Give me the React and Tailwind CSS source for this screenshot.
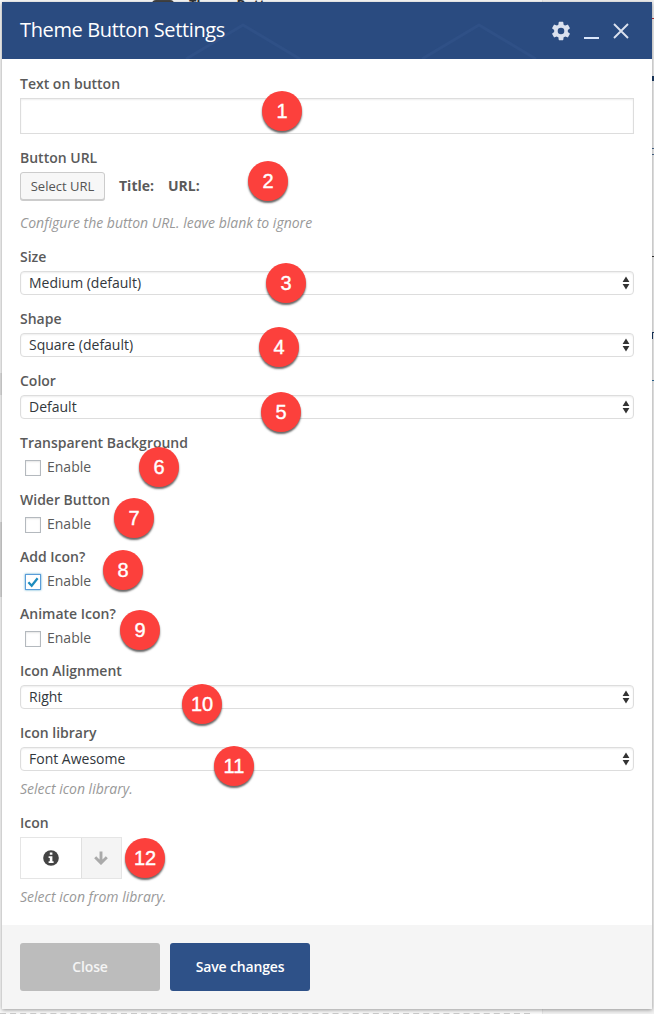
import React from "react";

const LABEL = "block h-5 text-[14px] leading-5 font-semibold text-[#5a5a5a]";
const HELP = "text-[14px] leading-5 italic text-[#999]";

function Select({ label, value }) {
  return (
    <div>
      <span className={LABEL}>{label}</span>
      <div className="mt-1 flex h-6 items-center justify-between rounded-[4px] border border-[#ddd] pl-2 pr-[3px] shadow-[inset_0_1px_2px_rgba(0,0,0,0.07)]">
        <span className="text-[14px] leading-[22px] text-[#32373c]">{value}</span>
        <svg width="8" height="14" viewBox="0 0 8 14" fill="#333">
          <path d="M4 .6 7.4 6H.6zM4 13.4 .6 8h6.8z" />
        </svg>
      </div>
    </div>
  );
}

function Check({ label, checked }) {
  return (
    <div>
      <span className={LABEL}>{label}</span>
      <div className="mt-1 flex h-5 items-center gap-[6px] pl-[5px]">
        <span
          className={
            checked
              ? "mt-[2px] flex h-4 w-4 items-center justify-center border border-[#5b9dd9] bg-white shadow-[0_0_2px_rgba(30,140,190,0.8)]"
              : "mt-[2px] flex h-4 w-4 border border-[#b4b9be] bg-white shadow-[inset_0_1px_2px_rgba(0,0,0,0.1)]"
          }
        >
          {checked && (
            <svg width="12" height="12" viewBox="0 0 12 12" fill="none" stroke="#1e8cbe" strokeWidth="2.3" className="shrink-0">
              <path d="M1.4 6.2 4.7 9.7 10.6 2.2" />
            </svg>
          )}
        </span>
        <span className="text-[14px] leading-5 text-[#5a5a5a]">Enable</span>
      </div>
    </div>
  );
}

const callouts = [
  [282, 111], [268, 181], [286, 283], [279, 347], [281, 412], [159, 467],
  [134, 518], [123, 570], [140, 630], [202, 704], [234, 766], [145, 858],
];

export default function App() {
  return (
    <div className="relative h-[1014px] w-[654px] overflow-hidden bg-[#f1f1f1] font-['Open_Sans',sans-serif]">
      {/* Page behind the dialog */}
      <div className="absolute left-0 top-0 h-full w-[543px] border-r border-[#e5e5e5] bg-[#fafafa]" />
      <div className="absolute left-0 top-[522px] h-[75px] w-[2px] bg-[#ddd]" />
      <div className="absolute left-0 top-[373px] h-[22px] w-[2px] bg-[#e5e5e5]" />
      <div className="absolute left-0 top-[1013px] w-[530px] border-t-2 border-dashed border-[#ccc]" />
      <div className="absolute left-[152px] top-0 h-[24px] w-[22px] rounded-[4px] bg-[#444]" />
      <span className="absolute left-[189px] top-[-5px] text-[13px] leading-[18px] font-bold text-[#333]">Theme Button</span>
      <div className="absolute left-[652px] top-[18px] h-px w-[2px] bg-[#b33]" />
      <div className="absolute left-[652px] top-[76px] h-[5px] w-[2px] bg-[#1b3a63]" />
      <div className="absolute left-[652px] top-[148px] h-[7px] w-[2px] border-y border-[#4a6a90]" />
      <div className="absolute left-[652px] top-[256px] h-px w-[2px] bg-[#333]" />
      <div className="absolute left-[652px] top-[332px] h-[7px] w-[2px] border-t border-l border-[#1b3a63]" />
      <div className="absolute left-[652px] top-[380px] h-px w-[2px] bg-[#2a6a9a]" />

      <div className="absolute left-[2px] top-[2px] flex h-[1007px] w-[650px] flex-col bg-white shadow-[0_1px_4px_rgba(0,0,0,0.4)]">
        <header className="relative flex h-[57px] shrink-0 items-center justify-between bg-[#2a4b80] pl-[18px] pr-[23px]">
          <svg className="absolute left-0 top-0" width="650" height="57" fill="none" stroke="#2f5086" strokeWidth="3">
            <path d="M184 57 241 23 298 57M420 57 477 23 534 57" />
          </svg>
          <h1 className="relative -mt-[2px] text-[20px] leading-[28px] tracking-[-0.36px] text-white">Theme Button Settings</h1>
          <div className="relative flex items-center">
            <svg width="22" height="22" viewBox="0 0 24 24" fill="#dbe1ee">
              <path d="M19.43 12.98c.04-.32.07-.64.07-.98s-.03-.66-.07-.98l2.11-1.65a.5.5 0 0 0 .12-.64l-2-3.46a.5.5 0 0 0-.61-.22l-2.49 1a7.3 7.3 0 0 0-1.69-.98l-.38-2.65A.49.49 0 0 0 14 2h-4a.49.49 0 0 0-.49.42l-.38 2.65c-.61.25-1.17.59-1.69.98l-2.49-1a.5.5 0 0 0-.61.22l-2 3.46a.5.5 0 0 0 .12.64l2.11 1.65c-.04.32-.07.65-.07.98s.03.66.07.98l-2.11 1.65a.5.5 0 0 0-.12.64l2 3.46c.12.22.39.3.61.22l2.49-1c.52.4 1.08.73 1.69.98l.38 2.65c.03.24.24.42.49.42h4c.25 0 .46-.18.49-.42l.38-2.65c.61-.25 1.17-.59 1.69-.98l2.49 1c.23.09.49 0 .61-.22l2-3.46a.5.5 0 0 0-.12-.64zM12 15.6a3.6 3.6 0 1 1 0-7.2 3.6 3.6 0 0 1 0 7.2z" />
            </svg>
            <span className="ml-3 mt-[15px] h-[2px] w-[15px] bg-[#dbe7fb]" />
            <svg className="ml-[14px]" width="16" height="16" viewBox="0 0 16 16" fill="none" stroke="#dbe1ee" strokeWidth="1.9">
              <path d="M1 1 15 15M15 1 1 15" />
            </svg>
          </div>
        </header>

        <main className="flex flex-1 flex-col gap-[14px] px-[18px] pt-[15px]">
          <div>
            <span className={LABEL}>Text on button</span>
            <div className="mt-1 h-9 border border-[#ddd] shadow-[inset_0_1px_2px_rgba(0,0,0,0.07)]" />
          </div>
          <div>
            <span className={LABEL}>Button URL</span>
            <div className="mt-1 flex h-[28px] items-center text-[14px] font-bold text-[#5a5a5a]">
              <button className="h-[28px] w-[85px] rounded-[3px] border border-[#ccc] bg-[#f7f7f7] text-[13px] leading-[26px] font-normal text-[#555] shadow-[0_1px_0_#ccc]">
                Select URL
              </button>
              <span className="-mt-[2px] ml-[14px]">Title:</span>
              <span className="-mt-[2px] ml-[14px]">URL:</span>
            </div>
            <p className={`mt-[13px] ${HELP}`}>Configure the button URL. leave blank to ignore</p>
          </div>
          <Select label="Size" value="Medium (default)" />
          <Select label="Shape" value="Square (default)" />
          <Select label="Color" value="Default" />
          <div className="flex flex-col gap-[13px]">
            <Check label="Transparent Background" />
            <Check label="Wider Button" />
            <Check label="Add Icon?" checked />
            <Check label="Animate Icon?" />
          </div>
          <div className="-mt-px">
            <Select label="Icon Alignment" value="Right" />
          </div>
          <div>
            <Select label="Icon library" value="Font Awesome" />
            <p className={`mt-2 ${HELP}`}>Select icon library.</p>
          </div>
          <div>
            <span className={LABEL}>Icon</span>
            <div className="mt-1 flex h-[42px] w-[102px] border border-[#e5e5e5]">
              <div className="flex w-[61px] items-center justify-center border-r border-[#e0e0e0]">
                <svg width="16" height="16" viewBox="0 0 16 16">
                  <circle cx="8" cy="8" r="7.8" fill="#444" />
                  <path fill="#fff" d="M6.8 2.6h2.6v2.2H6.8zM5.6 6.2h3.8v5h1.2v1.9h-5v-1.9h1.2V8.1H5.6z" />
                </svg>
              </div>
              <div className="flex flex-1 items-center justify-center bg-[#f4f4f4] pr-px pb-px">
                <svg width="14" height="14" viewBox="0 0 14 14" fill="none" stroke="#aaa" strokeWidth="2.9">
                  <path d="M7 .5V12M1.2 6.2 7 12l5.8-5.8" />
                </svg>
              </div>
            </div>
            <p className={`mt-2 ${HELP}`}>Select icon from library.</p>
          </div>
        </main>

        <footer className="flex h-[84px] shrink-0 gap-[10px] bg-[#f5f5f5] px-[18px] pt-[18px] text-[14px] font-semibold tracking-[-0.15px] text-white">
          <button className="h-12 w-[140px] rounded-[3px] bg-[#bcbcbc] pb-[2px] text-[#f4f4f4]">Close</button>
          <button className="h-12 w-[140px] rounded-[3px] bg-[#2e5188] pb-[2px]">Save changes</button>
        </footer>
      </div>

      {callouts.map(([x, y], i) => (
        <span
          key={i}
          style={{ left: x - 20, top: y - 20 }}
          className="absolute flex h-10 w-10 items-center justify-center rounded-full bg-[#fc403c] font-['Liberation_Sans',Arial,sans-serif] text-[20px] leading-none text-white shadow-[0_2px_2px_rgba(0,0,0,0.6)] [-webkit-text-stroke:0.4px_white]"
        >
          {i + 1}
        </span>
      ))}
    </div>
  );
}
